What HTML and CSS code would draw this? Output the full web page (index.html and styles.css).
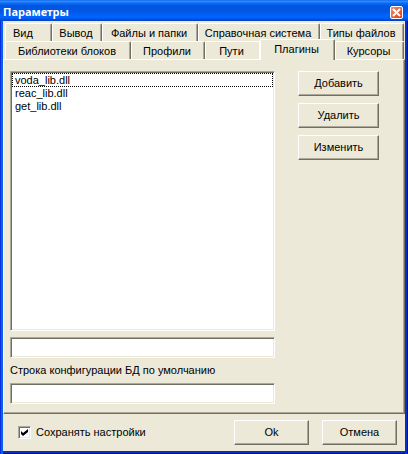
FILE: index.html
```html
<!DOCTYPE html>
<html lang="ru">
<head>
<meta charset="utf-8">
<title>Параметры</title>
<link rel="stylesheet" href="styles.css">
</head>
<body>
<main class="window">
  <header class="titlebar">
    <h1 class="title">Параметры</h1>
    <button class="close" type="button" aria-label="Закрыть">
      <svg viewBox="0 0 13 13" width="13" height="13" aria-hidden="true"><path d="M3 3l7 7M10 3l-7 7" stroke="#fff" stroke-width="2"/></svg>
    </button>
  </header>
  <form class="content">
    <div class="tabs" role="tablist">
      <div class="tab-row row-back">
        <button class="tab start" type="button" role="tab">Вид</button>
        <button class="tab" type="button" role="tab">Вывод</button>
        <button class="tab" type="button" role="tab">Файлы и папки</button>
        <button class="tab" type="button" role="tab">Справочная система</button>
        <button class="tab" type="button" role="tab">Типы файлов</button>
      </div>
      <div class="tab-row row-front">
        <button class="tab" type="button" role="tab">Библиотеки блоков</button>
        <button class="tab" type="button" role="tab">Профили</button>
        <button class="tab before-active" type="button" role="tab">Пути</button>
        <button class="tab active" type="button" role="tab" aria-selected="true">Плагины</button>
        <button class="tab" type="button" role="tab">Курсоры</button>
      </div>
    </div>
    <section class="page" role="tabpanel">
      <div class="fields">
        <select class="sunken list" size="3" aria-label="Плагины">
          <option class="focused">voda_lib.dll</option>
          <option>reac_lib.dll</option>
          <option>get_lib.dll</option>
        </select>
        <input class="sunken field" type="text" aria-label="Плагин">
        <label class="caption" for="config">Строка конфигурации БД по умолчанию</label>
        <input class="sunken field" type="text" id="config">
      </div>
      <div class="actions">
        <button class="button" type="button">Добавить</button>
        <button class="button" type="button">Удалить</button>
        <button class="button" type="button">Изменить</button>
      </div>
    </section>
    <footer class="footer">
      <label class="check"><input class="box" type="checkbox" checked>Сохранять настройки</label>
      <button class="button" type="submit">Ok</button>
      <button class="button" type="button">Отмена</button>
    </footer>
  </form>
</main>
</body>
</html>
```
FILE: styles.css
```css
* { box-sizing: border-box; }

body {
  margin: 0;
  font: 11px/13px "Liberation Sans", Arial, sans-serif;
  color: #000;
}

button, input, select { font: inherit; color: inherit; margin: 0; }

.window {
  display: flex;
  flex-direction: column;
  min-height: 100vh;
  padding: 0 3px 3px;
  background: #ece9d8;
  box-shadow: inset 1px 0 #0831d9, inset 3px 0 #0860f0, inset -1px 0 #00138c, inset -3px 0 #0830c0, inset 0 -1px #00138c, inset 0 -3px #0830c0;
}

.titlebar {
  display: flex;
  align-items: center;
  justify-content: space-between;
  height: 21px;
  margin: 0 -3px;
  padding: 3px 5px 0 3px;
  background: linear-gradient(#0058e6 0, #3a93ff 1px, #0a70f5 3px, #0055e0 6px, #0058e8 12px, #0066ff 16px, #0060f8 18px, #0040c0 21px);
}

.title {
  margin: 0;
  font: bold 11px/16px "Noto Sans", "Open Sans", sans-serif;
  color: #fff;
}

.close {
  width: 13px;
  height: 13px;
  padding: 0;
  border: 1px solid #fff;
  border-radius: 2px;
  background: linear-gradient(135deg, #f09078, #d83c14);
}

.close svg { display: block; margin: -1px; }

.content {
  display: flex;
  flex: 1;
  flex-direction: column;
  padding-top: 2px;
}

.tabs { padding: 0 1px 0 2px; }

.tab-row { display: grid; height: 18px; }
.row-back { grid-template-columns: 47fr 50fr 96fr 122fr 84fr; }
.row-front { grid-template-columns: 126fr 74fr 55fr 75fr 69fr; }

.tab {
  padding: 2px 2px 0 0;
  border: solid;
  border-width: 1px 1px 0 1px;
  border-color: #fff #716f64 #fff #fff;
  border-radius: 2px 2px 0 0;
  background: #ece9d8;
  box-shadow: inset -1px 0 #aca899;
  white-space: nowrap;
}

.tab.start { padding-left: 7px; text-align: left; }

.tab.before-active { border-right-color: #fff; box-shadow: none; }

.tab.active {
  z-index: 1;
  margin: -2px 0 -1px;
  padding: 0 2px 2px 0;
}

.page {
  display: flex;
  flex: 1;
  gap: 23px;
  padding: 11px 25px 9px 6px;
  border: solid;
  border-width: 1px;
  border-color: #fff #716f64 #716f64 #fff;
  box-shadow: inset -1px -1px #aca899;
}

.fields {
  display: flex;
  flex: 1;
  flex-direction: column;
  min-width: 0;
}

.sunken {
  width: 100%;
  border: 1px solid;
  border-color: #aca899 #fff #fff #aca899;
  border-radius: 0;
  outline: 0;
  background: #fff;
  box-shadow: inset 1px 1px #716f64, inset -1px -1px #ece9d8;
}

.list {
  flex: 1;
  margin-bottom: 6px;
  padding: 1px;
  overflow: hidden;
}

.list option { min-height: 13px; padding: 0 3px; line-height: 13px; }
.list .focused { padding: 0 2px; border: 1px dotted #000; line-height: 11px; }

.field { height: 21px; padding: 2px 4px; }
.caption { margin: 6px 0; line-height: 13px; }

.actions { display: flex; flex-direction: column; gap: 7px; width: 81px; }

.button {
  height: 25px;
  padding: 0;
  border: 1px solid;
  border-color: #fff #716f64 #716f64 #fff;
  background: #ece9d8;
  box-shadow: inset -1px -1px #aca899;
}

.footer {
  display: flex;
  align-items: center;
  gap: 13px;
  padding: 6px 8px 6px 15px;
}

.footer .button { width: 75px; }

.check { display: flex; flex: 1; align-items: center; gap: 5px; }

.box {
  appearance: none;
  width: 13px;
  height: 13px;
  border: 1px solid;
  border-color: #aca899 #fff #fff #aca899;
  background: #fff;
  box-shadow: inset 1px 1px #716f64, inset -1px -1px #ece9d8;
}

.box:checked::before {
  content: "";
  display: block;
  width: 7px;
  height: 7px;
  margin: 2px;
  background: #000;
  clip-path: polygon(0 29%, 0 71%, 29% 100%, 100% 43%, 100% 0, 29% 57%);
}
```
